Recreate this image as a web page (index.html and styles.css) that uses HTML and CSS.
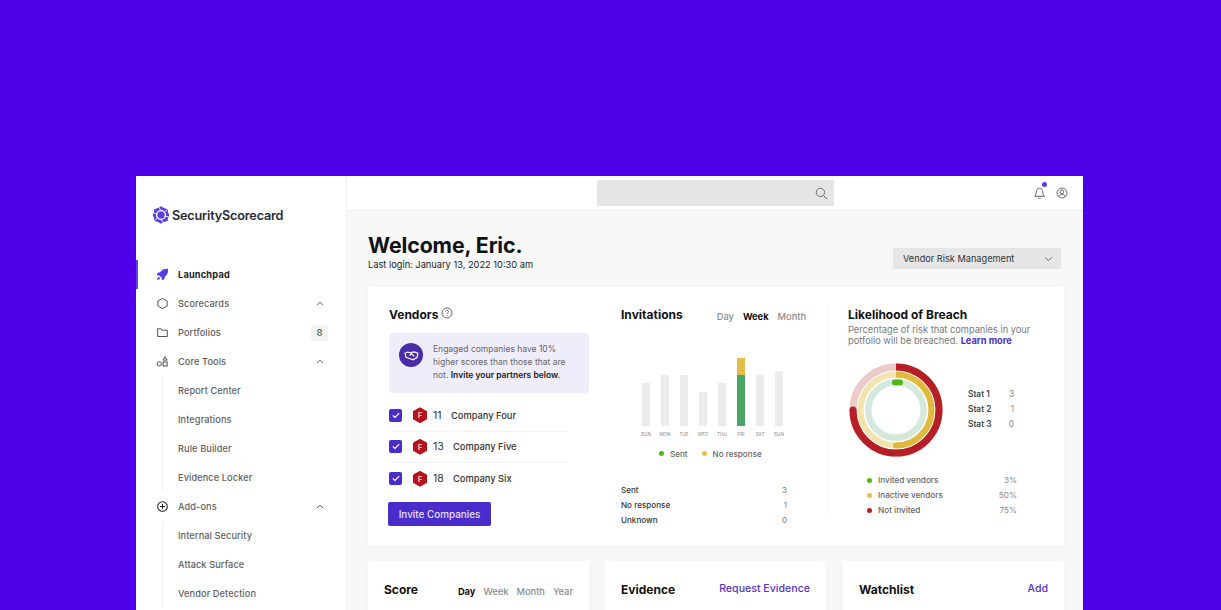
FILE: index.html
```html
<!DOCTYPE html>
<html lang="en">
<head>
<meta charset="utf-8">
<title>SecurityScorecard</title>
<link rel="stylesheet" href="styles.css">
</head>
<body>
<div class="app">
  <aside class="sidebar">
    <div class="logo">
      <svg class="logo-mark" viewBox="0 0 20 20" width="18" height="20"><path d="M10 .4 13.300 2.300 17.500 3.500 17.800 7 19.200 10 17.800 13 17.500 16.500 13.300 17.700 10 19.600 6.700 17.700 2.500 16.500 2.200 13 .8 10 2.200 7 2.500 3.500 6.700 2.300Z" fill="#5b3fe0"/><circle cx="10" cy="10" r="4.900" fill="none" stroke="#fff" stroke-width="1.500"/><circle cx="10" cy="10" r="2.700" fill="#5b3fe0"/><path d="M8 1.500 9.500 5M17 4l-3 2.500M18 12l-3.600-.6M12 18.500l-1.500-3.500M3 16l3-2.500M2 8l3.600.6" stroke="#fff" stroke-width="1"/></svg>
      <span>SecurityScorecard</span>
    </div>
    <nav class="nav">
      <a class="nav-item active">
        <svg class="nav-icon" viewBox="0 0 14 14"><path d="M13 1C9.500.6 6.500 1.800 4.500 4.500L1.800 5 .8 7.600 3.500 8 6 10.500l.4 2.700 2.600-1 .5-2.700C12.200 7.500 13.400 4.500 13 1Z" fill="#5b3fe0"/><path d="M3 9.500c-1 .4-1.800 2-1.800 3.300 1.300 0 2.900-.8 3.300-1.800Z" fill="#5b3fe0"/></svg>
        <span class="nav-label">Launchpad</span>
      </a>
      <a class="nav-item">
        <svg class="nav-icon" viewBox="0 0 14 14"><path d="M7 1.500 12 4.300v5.400L7 12.500 2 9.700V4.300Z" fill="none" stroke="#444" stroke-width="1"/></svg>
        <span class="nav-label">Scorecards</span>
        <svg class="caret" viewBox="0 0 8 5"><path d="M1 4 4 1.200 7 4" fill="none" stroke="#666" stroke-width="1"/></svg>
      </a>
      <a class="nav-item">
        <svg class="nav-icon" viewBox="0 0 14 14"><path d="M1.800 3h3.600l1 1.500h5.800v6.800H1.800Z" fill="none" stroke="#444" stroke-width="1"/></svg>
        <span class="nav-label">Portfolios</span>
        <span class="badge">8</span>
      </a>
      <a class="nav-item">
        <svg class="nav-icon" viewBox="0 0 14 14"><circle cx="3.500" cy="9.500" r="2.300" fill="none" stroke="#444"/><rect x="7.600" y="7.500" width="4.400" height="4.400" fill="none" stroke="#444"/><path d="M9.800 1.800 12 5.500H7.600Z" fill="none" stroke="#444"/></svg>
        <span class="nav-label">Core Tools</span>
        <svg class="caret" viewBox="0 0 8 5"><path d="M1 4 4 1.200 7 4" fill="none" stroke="#666" stroke-width="1"/></svg>
      </a>
      <div class="subnav">
        <a class="sub-item">Report Center</a>
        <a class="sub-item">Integrations</a>
        <a class="sub-item">Rule Builder</a>
        <a class="sub-item">Evidence Locker</a>
      </div>
      <a class="nav-item">
        <svg class="nav-icon" viewBox="0 0 14 14"><circle cx="7" cy="7" r="5.200" fill="none" stroke="#222" stroke-width="1.100"/><path d="M7 4.200v5.600M4.200 7h5.600" stroke="#222" stroke-width="1.100"/></svg>
        <span class="nav-label">Add-ons</span>
        <svg class="caret" viewBox="0 0 8 5"><path d="M1 4 4 1.200 7 4" fill="none" stroke="#666" stroke-width="1"/></svg>
      </a>
      <div class="subnav">
        <a class="sub-item">Internal Security</a>
        <a class="sub-item">Attack Surface</a>
        <a class="sub-item">Vendor Detection</a>
      </div>
    </nav>
  </aside>
  <div class="content">
    <header class="topbar">
      <div class="search">
        <svg viewBox="0 0 14 14" width="13" height="13"><circle cx="5.800" cy="5.800" r="4.500" fill="none" stroke="#666" stroke-width="1"/><path d="m9.200 9.200 4 4" stroke="#666" stroke-width="1"/></svg>
      </div>
      <div class="top-icons">
        <span class="bell">
          <svg viewBox="0 0 14 14" width="13" height="13"><path d="M7 1.500c-2.300 0-3.500 1.700-3.500 3.800 0 2.700-1 3.900-1.700 4.700h10.400c-.7-.8-1.700-2-1.700-4.700C10.500 3.200 9.300 1.500 7 1.500ZM5.700 11.800c.4.700 2.200.7 2.600 0" fill="none" stroke="#555" stroke-width="1"/></svg>
          <i class="bell-dot"></i>
        </span>
        <svg viewBox="0 0 14 14" width="12" height="12"><circle cx="7" cy="7" r="5.800" fill="none" stroke="#555" stroke-width="1"/><circle cx="7" cy="5.600" r="2.200" fill="none" stroke="#555" stroke-width="1"/><path d="M3.200 11c.8-1.600 2.200-2.200 3.800-2.200s3 .6 3.800 2.200" fill="none" stroke="#555" stroke-width="1"/></svg>
      </div>
    </header>
    <main class="main">
      <div class="page-head">
        <div>
          <h1 class="welcome">Welcome, Eric.</h1>
          <p class="last-login">Last login: January 13, 2022 10:30 am</p>
        </div>
        <div class="select">
          <span>Vendor Risk Management</span>
          <svg viewBox="0 0 10 6" width="9" height="6"><path d="M1 1 5 4.800 9 1" fill="none" stroke="#666" stroke-width="1"/></svg>
        </div>
      </div>

      <section class="card hero">
        <div class="col-vendors">
          <h2 class="title vendors-title">Vendors
            <svg viewBox="0 0 12 12" width="12" height="12"><circle cx="6" cy="6" r="5" fill="none" stroke="#444" stroke-width=".8"/><path d="M4.500 4.700C4.500 3.800 5.200 3.300 6 3.300s1.500.5 1.500 1.300c0 1.200-1.500 1.200-1.500 2.400" fill="none" stroke="#444" stroke-width=".8"/><circle cx="6" cy="8.600" r=".5" fill="#444"/></svg>
          </h2>
          <div class="banner">
            <span class="banner-icon">
              <svg viewBox="0 0 16 12" width="15" height="11"><path d="M1 3.500 4 2.200l3 1 2-1 3 .2 3 1.300-1 4.500-4.500 2.500L5 9 2 8Z" fill="none" stroke="#fff" stroke-width="1.300"/><path d="m6 6 2-2 3 3" fill="none" stroke="#fff" stroke-width="1.300"/></svg>
            </span>
            <p>Engaged companies have 10% higher scores than those that are not. <b>Invite your partners below.</b></p>
          </div>
          <ul class="vendor-list">
            <li class="vendor"><span class="check"><svg viewBox="0 0 10 8" width="8" height="7"><path d="M1 4 3.800 6.500 9 1" fill="none" stroke="#fff" stroke-width="1.500"/></svg></span><span class="hex">F</span><span class="vnum">11</span><span class="vname">Company Four</span></li>
            <li class="vendor"><span class="check"><svg viewBox="0 0 10 8" width="8" height="7"><path d="M1 4 3.800 6.500 9 1" fill="none" stroke="#fff" stroke-width="1.500"/></svg></span><span class="hex">F</span><span class="vnum">13</span><span class="vname wide">Company Five</span></li>
            <li class="vendor"><span class="check"><svg viewBox="0 0 10 8" width="8" height="7"><path d="M1 4 3.800 6.500 9 1" fill="none" stroke="#fff" stroke-width="1.500"/></svg></span><span class="hex">F</span><span class="vnum">18</span><span class="vname wide">Company Six</span></li>
          </ul>
          <button class="invite">Invite Companies</button>
        </div>

        <div class="col-invites">
          <div class="invites-head">
            <h2 class="title">Invitations</h2>
            <div class="tabs"><span>Day</span><span class="on">Week</span><span>Month</span></div>
          </div>
          <div class="chart">
            <div class="bar-col"><div class="bar" style="height:43px"></div><span>SUN</span></div>
            <div class="bar-col"><div class="bar" style="height:51px"></div><span>MON</span></div>
            <div class="bar-col"><div class="bar" style="height:51px"></div><span>TUE</span></div>
            <div class="bar-col"><div class="bar" style="height:34px"></div><span>WED</span></div>
            <div class="bar-col"><div class="bar" style="height:43px"></div><span>THU</span></div>
            <div class="bar-col"><div class="bar seg-y" style="height:17px"></div><div class="bar seg-g" style="height:51px"></div><span>FRI</span></div>
            <div class="bar-col"><div class="bar" style="height:51px"></div><span>SAT</span></div>
            <div class="bar-col"><div class="bar" style="height:55px"></div><span>SUN</span></div>
          </div>
          <div class="chart-legend">
            <span><i class="dot green"></i>Sent</span>
            <span><i class="dot yellow"></i>No response</span>
          </div>
          <dl class="stats">
            <div><dt>Sent</dt><dd>3</dd></div>
            <div><dt>No response</dt><dd>1</dd></div>
            <div><dt>Unknown</dt><dd>0</dd></div>
          </dl>
        </div>

        <div class="col-breach">
          <h2 class="title">Likelihood of Breach</h2>
          <p class="breach-desc">Percentage of risk that companies in your potfolio will be breached. <a>Learn more</a></p>
          <div class="donut-row">
            <svg class="donut" viewBox="0 0 94 94" width="94" height="94">
              <g fill="none" transform="rotate(-90 47 47)">
                <circle cx="47" cy="47" r="43" stroke="#eccaca" stroke-width="7"/>
                <circle cx="47" cy="47" r="43" stroke="#b71f27" stroke-width="7" pathLength="100" stroke-dasharray="75 100"/>
                <circle cx="47" cy="47" r="35.500" stroke="#f3e3ae" stroke-width="6"/>
                <circle cx="47" cy="47" r="35.500" stroke="#e0b93f" stroke-width="6" pathLength="100" stroke-dasharray="50 100"/>
                <circle cx="47" cy="47" r="27.700" stroke="#d4e9dc" stroke-width="6.500"/>
              </g>
              <circle cx="4" cy="47" r="3.500" fill="#b71f27"/>
              <circle cx="47" cy="82.500" r="3" fill="#e0b93f"/>
              <rect x="43" y="16.600" width="11" height="5.600" rx="2.800" fill="#4cb814"/>
            </svg>
            <dl class="mini-stats">
              <div><dt>Stat 1</dt><dd>3</dd></div>
              <div><dt>Stat 2</dt><dd>1</dd></div>
              <div><dt>Stat 3</dt><dd>0</dd></div>
            </dl>
          </div>
          <ul class="breach-legend">
            <li><i class="dot green"></i><span>Invited vendors</span><em>3%</em></li>
            <li><i class="dot yellow"></i><span>Inactive vendors</span><em>50%</em></li>
            <li><i class="dot red"></i><span>Not invited</span><em>75%</em></li>
          </ul>
        </div>
      </section>

      <div class="lower">
        <section class="card low">
          <h2 class="title">Score</h2>
          <div class="tabs score-tabs"><span class="on">Day</span><span>Week</span><span>Month</span><span>Year</span></div>
        </section>
        <section class="card low">
          <h2 class="title">Evidence</h2>
          <a class="action">Request Evidence</a>
        </section>
        <section class="card low">
          <h2 class="title">Watchlist</h2>
          <a class="action">Add</a>
        </section>
      </div>
    </main>
  </div>
</div>
</body>
</html>
```
FILE: styles.css
```css
* { box-sizing: border-box; }
html, body { margin: 0; height: 610px; overflow: hidden; }
body {
  background: #5000e8;
  padding: 176px 138px 0 136px;
  font-family: Inter, "Liberation Sans", sans-serif;
  color: #1a1a1a;
}
h1, h2, p, ul, dl, dd { margin: 0; padding: 0; }
ul { list-style: none; }
em { font-style: normal; }
i { display: inline-block; }

.app { display: flex; height: 434px; background: #fff; overflow: hidden; }

.sidebar { width: 211px; flex: none; background: #fff; border-right: 1px solid #efefef; }
.logo {
  display: flex; align-items: center; gap: 2px;
  padding: 0 0 6px 16px; height: 84px;
  font-size: 12.700px; font-weight: 600; letter-spacing: -.2px; color: #2a2a35;
}
.logo-mark { flex: none; }
.nav { font-size: 9.200px; font-weight: 500; color: #5e5e5e; letter-spacing: .1px; }
.nav-item {
  display: flex; align-items: center; height: 29px; padding: 0 22px 0 18px;
  border-left: 2px solid transparent;
}
.nav-item.active { border-left-color: #5b3fe0; color: #222; font-weight: 700; letter-spacing: .2px; }
.nav-icon { width: 13px; height: 13px; flex: none; margin-right: 9px; }
.nav-label { flex: 1; }
.caret { width: 8px; height: 5px; }
.badge {
  width: 17px; height: 16px; margin-right: -4px;
  display: flex; align-items: center; justify-content: center;
  background: #f2f2f2; border-radius: 2px; font-size: 9.500px; color: #555;
}
.subnav { margin-left: 26px; padding-left: 15px; border-left: 1px solid #f0f0f0; }
.sub-item { display: flex; align-items: center; height: 29px; }

.content { flex: 1; min-width: 0; display: flex; flex-direction: column; background: #f8f8f8; }
.topbar {
  height: 35px; flex: none; background: #fff; border-bottom: 1px solid #eee;
  display: flex; align-items: flex-start; padding: 4px 15px 0 250px;
}
.search {
  width: 237px; height: 26px; background: #e6e6e6;
  display: flex; align-items: center; justify-content: flex-end; padding-right: 6px;
}
.top-icons { margin-left: auto; display: flex; align-items: center; gap: 10px; height: 26px; }
.bell { position: relative; display: flex; }
.bell-dot {
  position: absolute; top: -5px; right: -1px; width: 5px; height: 5px;
  border-radius: 50%; background: #5b3fe0;
}

.main { flex: 1; padding: 22px 19px 0 21px; }
.page-head { display: flex; justify-content: space-between; align-items: flex-start; padding-right: 3px; height: 54px; }
.welcome { font-size: 21.300px; line-height: 24px; font-weight: 700; letter-spacing: -.1px; color: #111; }
.last-login { font-size: 9.250px; line-height: 12px; margin-top: 2px; color: #222; }
.select {
  width: 168px; height: 21px; margin-top: 15px; background: #e6e6e6;
  display: flex; align-items: center; justify-content: space-between;
  padding: 0 8px 0 10px; font-size: 9.200px; color: #333;
}

.card { background: #fff; box-shadow: 0 2px 8px rgba(0,0,0,.03); }
.hero { height: 259px; display: flex; position: relative; padding: 0 0 0 21px; }
.title { font-size: 12px; line-height: 16px; font-weight: 700; color: #111; }

.col-vendors { width: 200px; flex: none; padding-top: 20px; }
.vendors-title { display: flex; align-items: flex-start; gap: 3px; }
.banner {
  margin-top: 10px; height: 60px; background: #f0edfb; border-radius: 4px;
  display: flex; gap: 10px; padding: 10px 14px 0 10px;
}
.banner-icon {
  width: 24px; height: 24px; flex: none; border-radius: 50%; background: #4a2ca8;
  display: flex; align-items: center; justify-content: center;
}
.banner p { font-size: 8.500px; line-height: 13.200px; color: #666; }
.banner b { color: #1a1a1a; font-weight: 600; }
.vendor-list { margin-top: 7px; width: 179px; }
.vendor {
  display: flex; align-items: center; height: 31.500px;
  border-bottom: 1px solid #f3f3f3; font-size: 9.300px; font-weight: 500; color: #333;
}
.vendor:last-child { border-bottom: 0; }
.check {
  width: 13px; height: 13px; background: #4a2ccc; border-radius: 2px; flex: none;
  display: flex; align-items: center; justify-content: center;
}
.hex {
  width: 14px; height: 16px; margin-left: 11px; flex: none; background: #b5121b;
  clip-path: polygon(50% 0, 100% 25%, 100% 75%, 50% 100%, 0 75%, 0 25%);
  color: #f3b9b9; font-size: 8px; font-weight: 700;
  display: flex; align-items: center; justify-content: center;
}
.vnum { margin-left: 6px; font-size: 10.500px; font-weight: 400; color: #333; width: 18px; }
.vname { margin-left: 0; }
.vname.wide { margin-left: 2px; }
.invite {
  margin: 7px 0 0 -1px; width: 103px; height: 24px; border: 0; border-radius: 2px;
  background: #4a2ccc; color: #e6e0fa; font: 500 9.900px Inter, "Liberation Sans", sans-serif;
}

.col-invites { width: 185px; flex: none; margin-left: 32px; padding-top: 20px; }
.invites-head { display: flex; justify-content: space-between; align-items: center; }
.tabs { display: flex; gap: 9px; font-size: 9.300px; color: #8c8c8c; font-weight: 500; }
.tabs .on { color: #111; font-weight: 700; }
.invites-head .tabs { margin-top: 3px; }
.chart { display: flex; align-items: flex-end; height: 96px; margin: 7px 0 0 21px; gap: 11px; }
.bar-col { width: 8px; display: flex; flex-direction: column; align-items: center; position: relative; }
.bar-col span {
  position: absolute; top: 100%; margin-top: 6px; font-size: 4.600px; line-height: 6px; color: #888;
}
.bar { width: 8px; background: #ebebeb; }
.seg-y { background: #e2bd47; }
.seg-g { background: #48a563; }
.chart-legend {
  margin: 22px 0 0 38px; display: flex; gap: 14px; font-size: 8.100px; line-height: 12px; color: #666; font-weight: 500;
}
.dot { width: 5px; height: 5px; border-radius: 50%; margin-right: 6px; vertical-align: 1px; }
.green { background: #4cb814; }
.yellow { background: #e5bf4a; }
.red { background: #b71f27; }
.stats { margin-top: 23px; padding-right: 19px; font-size: 8.100px; font-weight: 500; color: #333; }
.stats div { display: flex; justify-content: space-between; height: 15px; line-height: 15px; }
.stats dd { color: #777; font-weight: 400; }

.col-breach {
  width: 237px; flex: none; margin-left: 21px; margin-top: 18px; height: 210px;
  padding: 2px 0 0 20px; border-left: 1px solid #f5f5f5;
}
.breach-desc { font-size: 9.250px; line-height: 11.300px; color: #777; margin-top: 1px; width: 195px; }
.breach-desc a { color: #4a2ccc; font-weight: 700; }
.donut-row { display: flex; align-items: center; margin: 16px 0 0 1px; }
.donut { flex: none; }
.mini-stats { margin-left: 25px; font-size: 8.300px; font-weight: 600; color: #444; }
.mini-stats div { display: flex; height: 15px; line-height: 15px; width: 46px; justify-content: space-between; }
.mini-stats dd { color: #888; font-weight: 400; }
.breach-legend { margin: 16px 0 0 19px; width: 150px; font-size: 8.200px; font-weight: 500; color: #666; }
.breach-legend li { display: flex; align-items: center; height: 15px; }
.breach-legend .dot { margin-right: 6px; }
.breach-legend span { flex: 1; }
.breach-legend em { color: #888; font-weight: 400; }

.lower { display: grid; grid-template-columns: 221px 221px 221px; column-gap: 16px; margin-top: 15px; }
.low {
  height: 80px; display: flex; justify-content: space-between; align-items: flex-start;
  padding: 21px 16px 0 16px;
}
.low:last-child { margin-left: 1px; margin-right: -1px; }
.score-tabs { gap: 8px; margin-top: 4px; }
.action { font-size: 10.600px; line-height: 14px; font-weight: 500; color: #5533c8; }
```
